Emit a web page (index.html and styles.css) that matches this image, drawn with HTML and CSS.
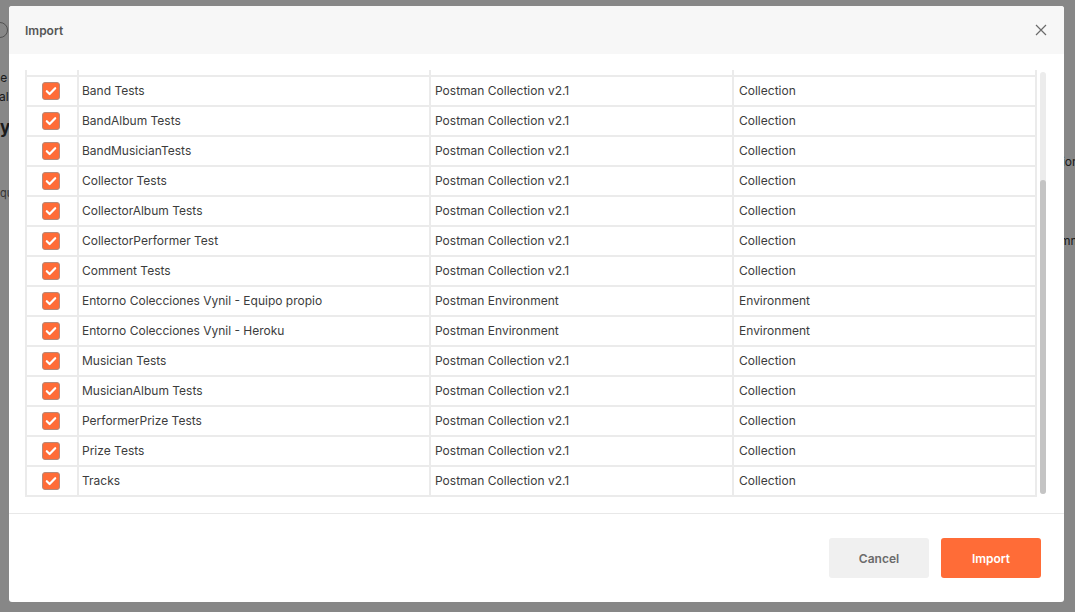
FILE: index.html
```html
<!DOCTYPE html>
<html lang="en">
<head>
    <meta charset="UTF-8">
    <meta name="viewport" content="width=device-width, initial-scale=1.0">
    <title>Import</title>
    <link rel="stylesheet" href="styles.css">
</head>
<body>

    <!-- App behind the dialog -->
    <div class="app">
        <div class="app-left">
            <div class="avatar"></div>
            <p class="bg-line l1">Use S</p>
            <p class="bg-line l2">Local</p>
            <p class="bg-title">My</p>
            <p class="bg-small">que</p>
        </div>
        <div class="app-right">
            <p class="bg-line r1">Connection</p>
            <p class="bg-line r2">Comm</p>
        </div>
    </div>

    <!-- Import dialog -->
    <div class="backdrop">
        <div class="modal">
            <div class="modal-header">
                <h2>Import</h2>
                <button class="close-btn" aria-label="Close">
                    <svg width="12" height="12" viewBox="0 0 12 12"><path d="M1 1L11 11M11 1L1 11" stroke="#6b6b6b" stroke-width="1.2" fill="none"/></svg>
                </button>
            </div>

            <div class="modal-body">
                <div class="list">
                    <div class="table">
                        <div class="row head">
                            <div class="cell check"></div>
                            <div class="cell">Name</div>
                            <div class="cell">Format</div>
                            <div class="cell">Import as</div>
                        </div>
                        <div class="row"><div class="cell check"><span class="box"></span></div><div class="cell">Album Tests</div><div class="cell">Postman Collection v2.1</div><div class="cell">Collection</div></div>
                        <div class="row"><div class="cell check"><span class="box"></span></div><div class="cell">AlbumBand Tests</div><div class="cell">Postman Collection v2.1</div><div class="cell">Collection</div></div>
                        <div class="row"><div class="cell check"><span class="box"></span></div><div class="cell">AlbumComment Tests</div><div class="cell">Postman Collection v2.1</div><div class="cell">Collection</div></div>
                        <div class="row"><div class="cell check"><span class="box"></span></div><div class="cell">AlbumTrack Tests</div><div class="cell">Postman Collection v2.1</div><div class="cell">Collection</div></div>
                        <div class="row"><div class="cell check"><span class="box"></span></div><div class="cell">Band Tests</div><div class="cell">Postman Collection v2.1</div><div class="cell">Collection</div></div>
                        <div class="row"><div class="cell check"><span class="box"></span></div><div class="cell">BandAlbum Tests</div><div class="cell">Postman Collection v2.1</div><div class="cell">Collection</div></div>
                        <div class="row"><div class="cell check"><span class="box"></span></div><div class="cell">BandMusicianTests</div><div class="cell">Postman Collection v2.1</div><div class="cell">Collection</div></div>
                        <div class="row"><div class="cell check"><span class="box"></span></div><div class="cell">Collector Tests</div><div class="cell">Postman Collection v2.1</div><div class="cell">Collection</div></div>
                        <div class="row"><div class="cell check"><span class="box"></span></div><div class="cell">CollectorAlbum Tests</div><div class="cell">Postman Collection v2.1</div><div class="cell">Collection</div></div>
                        <div class="row"><div class="cell check"><span class="box"></span></div><div class="cell">CollectorPerformer Test</div><div class="cell">Postman Collection v2.1</div><div class="cell">Collection</div></div>
                        <div class="row"><div class="cell check"><span class="box"></span></div><div class="cell">Comment Tests</div><div class="cell">Postman Collection v2.1</div><div class="cell">Collection</div></div>
                        <div class="row"><div class="cell check"><span class="box"></span></div><div class="cell">Entorno Colecciones Vynil - Equipo propio</div><div class="cell">Postman Environment</div><div class="cell">Environment</div></div>
                        <div class="row"><div class="cell check"><span class="box"></span></div><div class="cell">Entorno Colecciones Vynil - Heroku</div><div class="cell">Postman Environment</div><div class="cell">Environment</div></div>
                        <div class="row"><div class="cell check"><span class="box"></span></div><div class="cell">Musician Tests</div><div class="cell">Postman Collection v2.1</div><div class="cell">Collection</div></div>
                        <div class="row"><div class="cell check"><span class="box"></span></div><div class="cell">MusicianAlbum Tests</div><div class="cell">Postman Collection v2.1</div><div class="cell">Collection</div></div>
                        <div class="row"><div class="cell check"><span class="box"></span></div><div class="cell">PerformerPrize Tests</div><div class="cell">Postman Collection v2.1</div><div class="cell">Collection</div></div>
                        <div class="row"><div class="cell check"><span class="box"></span></div><div class="cell">Prize Tests</div><div class="cell">Postman Collection v2.1</div><div class="cell">Collection</div></div>
                        <div class="row"><div class="cell check"><span class="box"></span></div><div class="cell">Tracks</div><div class="cell">Postman Collection v2.1</div><div class="cell">Collection</div></div>
                    </div>
                </div>
                <!-- scrollbar, drawn by hand -->
                <div class="scrollbar"><div class="thumb"></div></div>
            </div>

            <div class="modal-footer">
                <button class="btn btn-cancel">Cancel</button>
                <button class="btn btn-import">Import</button>
            </div>
        </div>
    </div>

</body>
</html>
```

FILE: styles.css
```css
* {
    box-sizing: border-box;
}

body {
    margin: 0;
    font-family: Inter, "Open Sans", sans-serif;
    background-color: white;
    width: 1075px;
    height: 612px;
    overflow: hidden;
    position: relative;
}

/* App underneath */
.app {
    display: flex;
    justify-content: space-between;
    height: 100%;
    color: #333;
}

.app p {
    margin: 0;
    white-space: nowrap;
}

.app-left {
    width: 9px;
    overflow: hidden;
    padding-top: 22px;
}

.avatar {
    width: 16px;
    height: 16px;
    margin-left: -8px;
    border-radius: 50%;
    border: 1px solid #999;
}

.bg-line {
    font-size: 12px;
}

.l1 {
    margin-left: -15px !important;
    margin-top: 32px !important;
}

.l2 {
    margin-left: -22px !important;
    margin-top: 4px !important;
}

.bg-title {
    font-size: 17px;
    font-weight: 700;
    margin-left: -16px !important;
    margin-top: 13px !important;
}

.bg-small {
    font-size: 11px;
    color: #666;
    margin-left: 0;
    margin-top: 49px !important;
}

.app-right {
    width: 11px;
    overflow: hidden;
    padding-top: 154px;
}

.r1 {
    margin-left: -50px !important;
}

.r2 {
    margin-left: -20px !important;
    margin-top: 64px !important;
}

/* Dialog */
.backdrop {
    position: absolute;
    top: 0;
    left: 0;
    width: 100%;
    height: 100%;
    background-color: rgba(0, 0, 0, 0.47);
    padding: 6px 11px 10px 9px;
}

.modal {
    background-color: white;
    border-radius: 3px;
    height: 100%;
    display: flex;
    flex-direction: column;
    overflow: hidden;
}

.modal-header {
    height: 48px;
    background-color: #f7f7f7;
    display: flex;
    align-items: center;
    justify-content: space-between;
    padding: 0 17px 0 16px;
}

.modal-header h2 {
    margin: 0;
    font-size: 12px;
    font-weight: 600;
    color: #555;
}

.close-btn {
    background: none;
    border: none;
    padding: 0;
    width: 12px;
    height: 12px;
    display: flex;
    cursor: pointer;
}

.modal-body {
    display: flex;
    gap: 3px;
    padding: 16px 18px 16px 16px;
    border-bottom: 1px solid #e8e8e8;
}

.list {
    height: 427px;
    overflow: hidden;
    display: flex;
    flex-direction: column-reverse;
}

.scrollbar {
    width: 6px;
    margin: 2px 0 3px;
    background-color: #ececec;
    border-radius: 3px;
    display: flex;
    flex-direction: column;
    justify-content: flex-end;
}

.thumb {
    height: 314px;
    background-color: #c4c4c4;
    border-radius: 3px;
}

.table {
    width: 1012px;
    flex-shrink: 0;
    border-left: 2px solid #ebebeb;
    border-top: 2px solid #ebebeb;
}

.row {
    display: grid;
    grid-template-columns: 52px 352px 303px 303px;
    height: 30px;
    border-bottom: 2px solid #ebebeb;
}

.cell {
    border-right: 2px solid #ebebeb;
    display: flex;
    align-items: center;
    padding: 0 4px 1px;
    font-size: 12px;
    color: #3c3c3c;
    white-space: nowrap;
}

.cell:nth-child(2) {
    padding-left: 3px;
}

.cell:nth-child(4) {
    padding-left: 5px;
}

.row.head .cell {
    font-size: 11px;
    font-weight: 600;
    color: #6b6b6b;
}

.cell.check {
    justify-content: center;
    padding: 0 2px 0 0;
}

.box {
    width: 18px;
    height: 18px;
    border-radius: 3px;
    background-color: #ff6c37;
    border: 1px solid #b58a7a;
    background-image: url("data:image/svg+xml,%3Csvg xmlns='http://www.w3.org/2000/svg' width='16' height='16' viewBox='0 0 16 16'%3E%3Cpath d='M3.8 8.2L6.6 11L12.2 5.2' stroke='white' stroke-width='2.2' fill='none' stroke-linecap='round' stroke-linejoin='round'/%3E%3C/svg%3E");
    background-repeat: no-repeat;
    background-position: center;
}

.modal-footer {
    flex: 1;
    display: flex;
    justify-content: flex-end;
    align-items: center;
    gap: 12px;
    padding: 0 23px;
}

.btn {
    width: 100px;
    height: 40px;
    border: none;
    border-radius: 3px;
    font-family: Inter, "Open Sans", sans-serif;
    font-size: 12px;
    font-weight: 600;
    cursor: pointer;
}

.btn-cancel {
    background-color: #f0f0f0;
    color: #6b6b6b;
}

.btn-import {
    background-color: #ff6c37;
    color: white;
}
```
